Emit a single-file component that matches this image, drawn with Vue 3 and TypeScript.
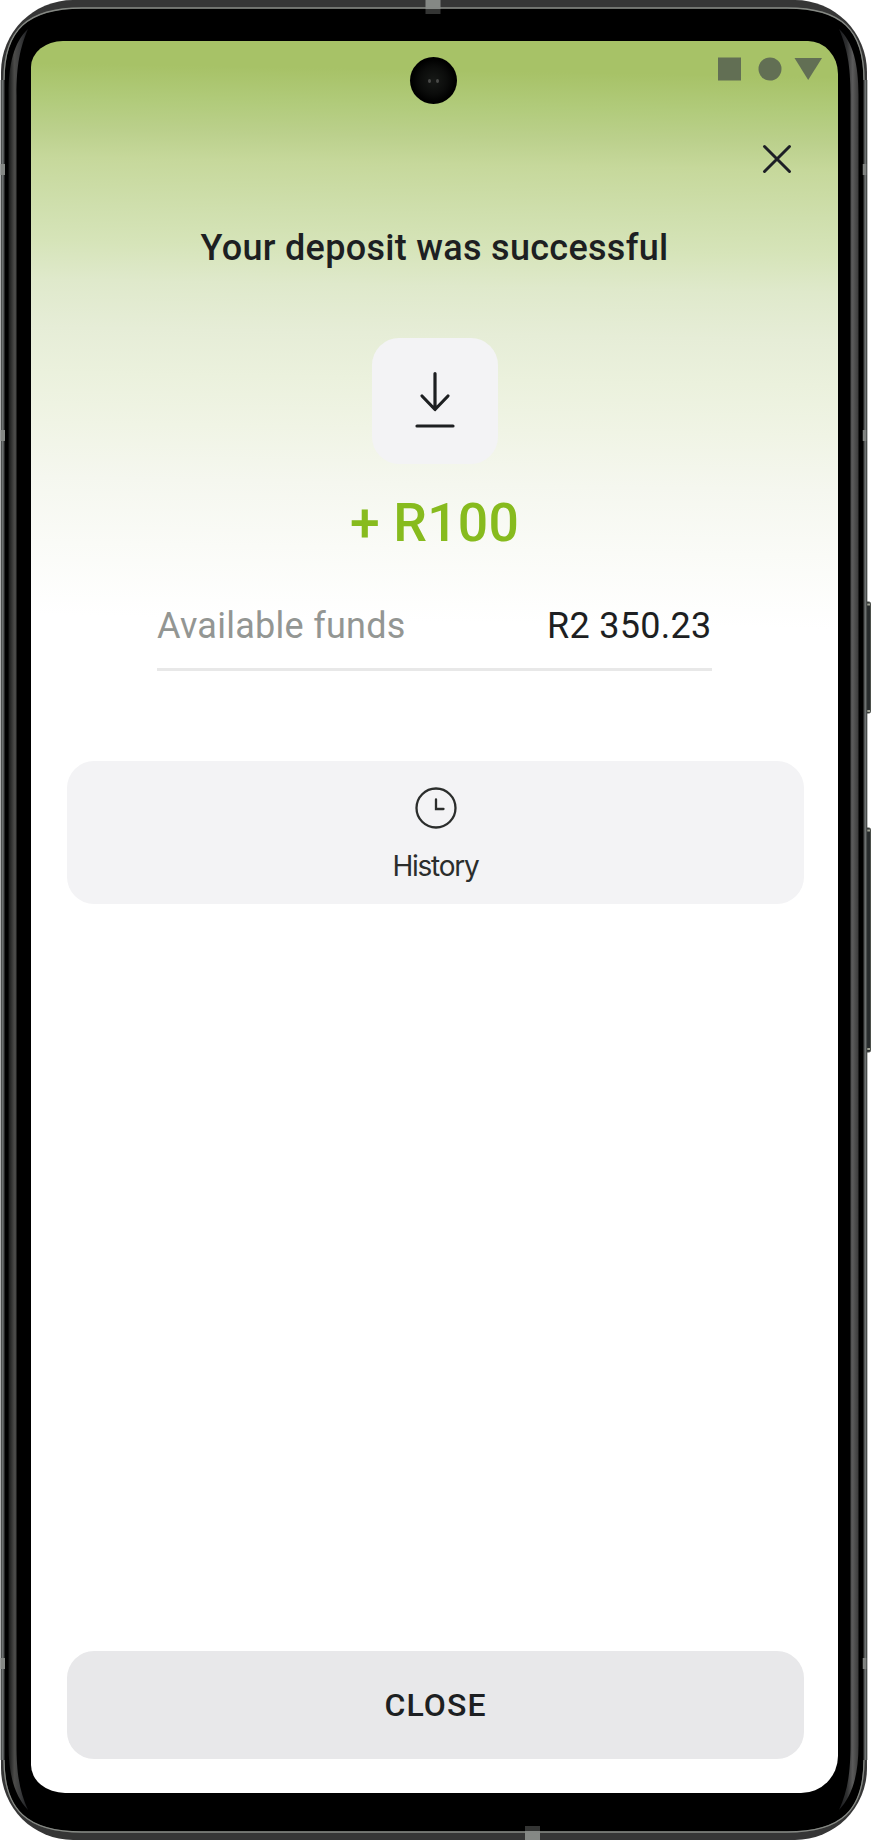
<script setup lang="ts">
interface Fund {
  label: string
  value: string
}

const title = 'Your deposit was successful'
const amount = '+ R100'
const funds: Fund[] = [{ label: 'Available funds', value: 'R2 350.23' }]
</script>

<template>
  <div class="phone">
    <svg class="shell" viewBox="0 0 872 1840" width="872" height="1840" aria-hidden="true">
      <defs>
        <linearGradient id="strip" x1="0" x2="1" y1="0" y2="0">
          <stop offset="0" stop-color="#161717" />
          <stop offset="0.3" stop-color="#4b4b49" />
          <stop offset="0.6" stop-color="#3b3c3d" />
          <stop offset="1" stop-color="#1b1c1f" />
        </linearGradient>
        <linearGradient id="stripRight" x1="1" x2="0" y1="0" y2="0">
          <stop offset="0" stop-color="#3a3a3a" />
          <stop offset="0.3" stop-color="#5b5b5b" />
          <stop offset="0.6" stop-color="#2f3031" />
          <stop offset="1" stop-color="#1b1c1f" />
        </linearGradient>
      </defs>

      <!-- side buttons -->
      <g fill="#272b2c" stroke="#4b4f4a">
        <rect x="864.5" y="602" width="6" height="111" rx="1.5" />
        <rect x="864.5" y="828" width="6" height="224" rx="1.5" />
      </g>
      <path d="M866 604.5h4M866 711h4M866 830.500h4M866 1049h4" stroke="#a0a395" stroke-width="2" />

      <!-- metal body -->
      <rect x="1" y="0" width="866" height="1840" rx="72" fill="#363636" />
      <path d="M2.500 80V1760M865.500 80V1760" stroke="#6d7171" stroke-width="2.500" />
      <path d="M1 80V1760M866.900 80V1760" stroke="#343837" stroke-width="0.800" />
      <path
        d="M4 80C4 30 27 8 82 8H787C842 8 864 30 864 80V1760C864 1810 842 1832 787 1832H82C27 1832 4 1810 4 1760Z"
        fill="#000" stroke="#4a4d4d" stroke-width="1"
      />
      <path
        d="M4 80C4 30 27 8 82 8H787C842 8 864 30 864 80M4 1760C4 1810 27 1832 82 1832H787C842 1832 864 1810 864 1760"
        fill="none" stroke="#858883" stroke-width="1.300"
      />
      <path d="M28 29C14 42 8.500 64 8.500 95V1745C8.500 1776 15 1796 28 1810C20 1792 16.500 1775 16.500 1745V95C16.500 65 20 48 28 29Z" fill="url(#strip)" />
      <path d="M839 29C853 42 858.500 64 858.500 95V1745C858.500 1776 852 1796 839 1810C847 1792 850.500 1775 850.500 1745V95C850.500 65 847 48 839 29Z" fill="url(#stripRight)" />

      <!-- antenna breaks -->
      <g fill="#858885">
        <rect x="425.500" y="0" width="15" height="9" />
        <rect x="525" y="1831" width="15" height="9" />
        <rect x="0.500" y="164" width="4.500" height="11" />
        <rect x="0.500" y="430" width="4.500" height="11" />
        <rect x="0.500" y="1658" width="4.500" height="11" />
      </g>
      <path d="M864.500 164v11M864.500 430v11M864.500 1658v11" stroke="#7f8280" stroke-width="3.500" />
      <path d="M425.500 9h15v5h-15zM525 1826h15v5h-15z" fill="#343534" />
    </svg>

    <main class="screen">
      <div class="camera"><i></i><i></i></div>

      <header class="status">
        <svg width="106" height="24" viewBox="0 0 106 24" aria-hidden="true">
          <g fill="#626f54">
            <rect x="1" y="0.500" width="23" height="23" />
            <circle cx="53" cy="12" r="11.500" />
            <path d="M77.500 1H105L91.200 23Z" />
          </g>
        </svg>
      </header>

      <button class="dismiss" aria-label="Dismiss">
        <svg width="30" height="30" viewBox="0 0 30 30" aria-hidden="true">
          <path d="M2.500 2.500L27.500 27.500M27.500 2.500L2.500 27.500" stroke="#1d1f26" stroke-width="3" stroke-linecap="round" />
        </svg>
      </button>

      <h1 class="title"><span>{{ title }}</span></h1>

      <div class="badge">
        <svg width="42" height="58" viewBox="0 0 42 58" fill="none" stroke="#1d1f21" stroke-width="3.200" stroke-linecap="round" stroke-linejoin="round" aria-hidden="true">
          <path d="M21 2.500V38M8 25L21 38.500L34 25M3 55H39" />
        </svg>
      </div>

      <p class="amount"><span>{{ amount }}</span></p>

      <dl class="funds">
        <div v-for="row in funds" :key="row.label" class="fund">
          <dt>{{ row.label }}</dt>
          <dd>{{ row.value }}</dd>
        </div>
      </dl>

      <button class="history">
        <svg width="42" height="42" viewBox="0 0 42 42" fill="none" stroke="#2b2d2c" stroke-width="2.300" stroke-linecap="round" aria-hidden="true">
          <circle cx="21" cy="21" r="19.500" />
          <path d="M21 12.500V22H28.500" />
        </svg>
        <span>History</span>
      </button>

      <button class="close"><span>CLOSE</span></button>
    </main>
  </div>
</template>

<style>
body {
  margin: 0;
  background: #fff;
}
</style>

<style scoped>
.phone {
  position: relative;
  box-sizing: border-box;
  width: 872px;
  height: 1840px;
  padding: 41px 34px 47px 31px;
  overflow: hidden;
  font-family: Roboto, "Liberation Sans", sans-serif;
  color: #1d1f22;
}
.shell {
  position: absolute;
  inset: 0;
}
.screen {
  position: relative;
  display: flex;
  flex-direction: column;
  box-sizing: border-box;
  height: 1752px;
  border-radius: 32px 30px 37px 34px / 26px 33px 37px 28px;
  background: linear-gradient(181deg, #a7c267 0, #a7c267 36px, #b1cb7b 72px, #bbd08c 102px, #c6d89b 130px, #cfdfad 178px, #d6e4b9 214px, #dfe9cb 252px, #e6edd7 300px, #ebf1dd 345px, #f0f4e5 395px, #f5f7ef 450px, #fafbf7 515px, #fff 588px);
}
button {
  padding: 0;
  border: 0;
  background: none;
  font: inherit;
  color: inherit;
}
h1, p, dl, dd {
  margin: 0;
}
svg {
  display: block;
}
span, dt, dd {
  white-space: nowrap;
}
.camera {
  position: absolute;
  top: 16px;
  left: 379px;
  width: 47px;
  height: 47px;
  border-radius: 50%;
  background: radial-gradient(circle, #171917 0, #0b0c0b 40%, #000 65%);
  display: flex;
  align-items: center;
  justify-content: center;
  gap: 5px;
}
.camera i {
  width: 3px;
  height: 4px;
  border-radius: 50%;
  background: #4a4b49;
}
.status {
  display: flex;
  justify-content: flex-end;
  padding: 15.500px 15.500px 0 0;
}
.dismiss {
  align-self: flex-end;
  margin: 63px 46.500px 0 0;
}
.title {
  height: 44px;
  margin-top: 52.500px;
  text-align: center;
  font-size: 36px;
  line-height: 44px;
  font-weight: 500;
  letter-spacing: 0.3px;
}
.badge {
  display: flex;
  align-items: center;
  justify-content: center;
  align-self: center;
  width: 126px;
  height: 126px;
  margin: 68px 0 0;
  border-radius: 27px;
  background: #f3f3f5;
}
.badge svg {
  margin-bottom: 3px;
}
.amount {
  height: 64px;
  margin-top: 27px;
  text-align: center;
  font-size: 53.500px;
  line-height: 64px;
  font-weight: 500;
  letter-spacing: 0.2px;
  color: #87bb1e;
}
.funds {
  margin: 48px 126.500px 0 126px;
}
.fund {
  display: flex;
  justify-content: space-between;
  box-sizing: border-box;
  height: 68px;
  padding-top: 1px;
  border-bottom: 3px solid #e8e8e8;
  font-size: 36px;
  line-height: 44px;
  letter-spacing: 0.27px;
}
.fund dt {
  color: #939693;
}
.history {
  display: flex;
  flex-direction: column;
  align-items: center;
  gap: 20px;
  box-sizing: border-box;
  height: 143px;
  margin: 90px 34px 0 36px;
  padding: 26px 0 0;
  border-radius: 27px;
  background: #f3f3f5;
}
.history span {
  font-family: Inter, sans-serif;
  font-size: 28px;
  line-height: 34px;
  letter-spacing: -1.25px;
  color: #2b2d2c;
}
.close {
  height: 108px;
  margin: auto 34px 34.500px 36px;
  border-radius: 27px;
  background: #e8e8ea;
  font-size: 32px;
  line-height: 38px;
  font-weight: 500;
  letter-spacing: 1.1px;
}
</style>
